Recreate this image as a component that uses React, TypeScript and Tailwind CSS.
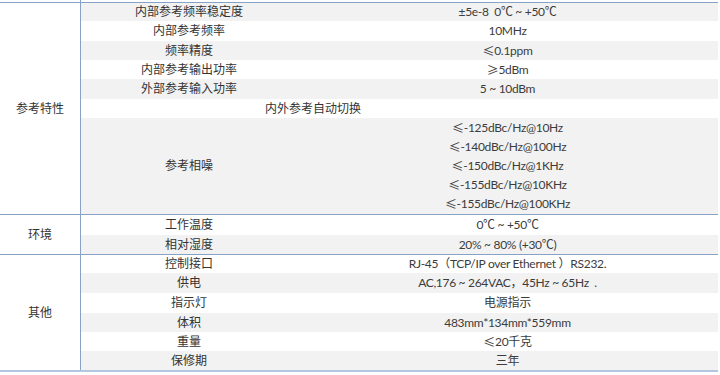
import React from 'react';

type Row = { name: string; value: string[]; h: string; span?: boolean };

const LINE = 'border-[#86a3c6]';

const sections: { label: string; rows: Row[] }[] = [
  {
    label: '参考特性',
    rows: [
      { name: '内部参考频率稳定度', value: ['±5e-8  0℃ ~ +50℃'], h: 'h-[18px]' },
      { name: '内部参考频率', value: ['10MHz'], h: 'h-[20px]' },
      { name: '频率精度', value: ['≤0.1ppm'], h: 'h-[19px]' },
      { name: '内部参考输出功率', value: ['≥5dBm'], h: 'h-[19px]' },
      { name: '外部参考输入功率', value: ['5 ~ 10dBm'], h: 'h-[20px]' },
      { name: '内外参考自动切换', value: [], h: 'h-[19px]', span: true },
      {
        name: '参考相噪',
        value: [
          '≤-125dBc/Hz@10Hz',
          '≤-140dBc/Hz@100Hz',
          '≤-150dBc/Hz@1KHz',
          '≤-155dBc/Hz@10KHz',
          '≤-155dBc/Hz@100KHz',
        ],
        h: 'h-[96px]',
      },
    ],
  },
  {
    label: '环境',
    rows: [
      { name: '工作温度', value: ['0℃ ~ +50℃'], h: 'h-[20px]' },
      { name: '相对湿度', value: ['20% ~ 80% (+30℃)'], h: 'h-[19px]' },
    ],
  },
  {
    label: '其他',
    rows: [
      { name: '控制接口', value: ['RJ-45（TCP/IP over Ethernet ）RS232.'], h: 'h-[18px]' },
      { name: '供电', value: ['AC,176 ~ 264VAC，45Hz ~ 65Hz  .'], h: 'h-[20px]' },
      { name: '指示灯', value: ['电源指示'], h: 'h-[20px]' },
      { name: '体积', value: ['483mm*134mm*559mm'], h: 'h-[19px]' },
      { name: '重量', value: ['≤20千克'], h: 'h-[19px]' },
      { name: '保修期', value: ['三年'], h: 'h-[19px]' },
    ],
  },
];

// ≤ / ≥ look better in the CJK face, Lato draws them tiny
const Value = ({ text }: { text: string }) => {
  const parts = text.split(/([≤≥])/);
  return (
    <>
      {parts.map((p, i) =>
        p === '≤' || p === '≥' ? (
          <span key={i} style={{ fontFamily: '"Noto Sans CJK SC", sans-serif' }}>
            {p}
          </span>
        ) : (
          <React.Fragment key={i}>{p}</React.Fragment>
        )
      )}
    </>
  );
};

export default function App() {
  let stripe = 0;
  return (
    <div
      className="w-[720px] h-[375px] bg-white text-[12px] leading-none text-[#333]"
      style={{ fontFamily: 'Lato, "Noto Sans CJK SC", sans-serif' }}
    >
      <div className="w-[718px]">
        {/* tail of the section above */}
        <div className="flex h-[2px]">
          <div className={`w-[81px] border-r ${LINE}`} />
        </div>

        {sections.map((sec, si) => (
          <div key={si} className={`flex border-t ${LINE}`}>
            <div className={`w-[81px] shrink-0 border-r ${LINE} flex items-center justify-center`}>
              {sec.label}
            </div>
            <div className="flex-1">
              {sec.rows.map((r, ri) => {
                const gray = stripe++ % 2 === 0;
                const bg = gray ? 'bg-[#f2f2f2]' : 'bg-white';
                if (r.span) {
                  return (
                    <div key={ri} className={`${r.h} ${bg} flex items-center pl-[184px]`}>
                      {r.name}
                    </div>
                  );
                }
                return (
                  <div key={ri} className={`${r.h} ${bg} flex`}>
                    <div className="w-[216px] flex items-center justify-center">{r.name}</div>
                    <div className="flex-1 flex flex-col justify-center">
                      {r.value.map((v, vi) => (
                        <div
                          key={vi}
                          className={`${r.value.length > 1 ? 'h-[19.2px]' : ''} flex items-center justify-center whitespace-pre tracking-[-0.3px] text-[#3c3c3c]`}
                        >
                          <Value text={v} />
                        </div>
                      ))}
                    </div>
                  </div>
                );
              })}
            </div>
          </div>
        ))}

        <div className="h-[2px] bg-[#b3c8e0]" />
      </div>
    </div>
  );
}
